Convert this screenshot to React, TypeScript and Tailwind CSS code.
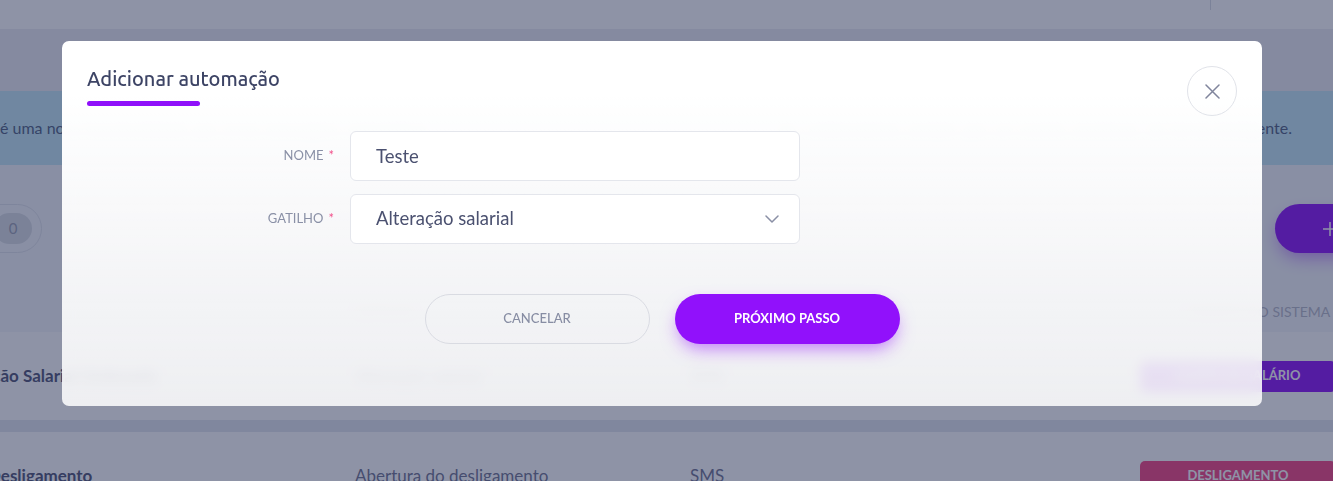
import React from 'react';

const Tag: React.FC<{ color: string; children: React.ReactNode }> = ({ color, children }) => (
  <div
    className={`flex h-[31px] w-[196px] shrink-0 items-center justify-center rounded-[5px] text-[13px] font-bold uppercase text-white ${color}`}
  >
    {children}
  </div>
);

const Page: React.FC = () => {
  return (
    <div className="flex flex-col">
      {/* topo */}
      <div className="flex h-[29px] justify-end bg-white pr-[122px]">
        <div className="h-[10px] border-l border-[#d9dce5]" />
      </div>
      <div className="h-[62px] bg-[#ececf3]" />

      {/* aviso */}
      <div className="flex h-[74px] items-center justify-between overflow-hidden whitespace-nowrap bg-[#c2e7f5] pr-[41px] text-[16px] text-[#4e5f80]">
        <span>é uma nova funcionalidade que envia mensagens automáticas</span>
        <span>aos colaboradores sempre que um evento acontecer, de forma inteligente.</span>
      </div>

      {/* filtros */}
      <div className="flex h-[167px] flex-col">
        <div className="mt-[39px] flex h-[49px] items-center justify-between">
          <div className="-ml-[79px] flex h-[49px] shrink-0 items-center gap-[12px] rounded-full border border-[#dfe2ea] pl-[20px] pr-[9px]">
            <span className="w-[40px] text-[14px] text-[#8a90a6]">Todas</span>
            <span className="flex h-[31px] w-[38px] items-center justify-center rounded-full bg-[#d8dce3] text-[15px] text-[#9aa0b2]">
              0
            </span>
          </div>
          <button className="-mr-[182px] flex h-[49px] w-[240px] shrink-0 items-center gap-[10px] rounded-full bg-[#8a10f7] pl-[47px] text-[13px] font-bold uppercase text-white shadow-[0_8px_18px_-4px_rgba(138,16,247,0.5)]">
            <svg width="16" height="16" viewBox="0 0 16 16" fill="none" stroke="currentColor" strokeWidth="1.5">
              <path d="M8 1v14M1 8h14" />
            </svg>
            Nova automação
          </button>
        </div>

        {/* cabeçalho tabela */}
        <div className="-ml-[12px] mt-auto flex h-[42px] items-center text-[14px] uppercase text-[#b4b8c6]">
          <div className="w-[367px] shrink-0" />
          <div className="w-[335px] shrink-0">Gatilho</div>
          <div className="w-[450px] shrink-0">Canal</div>
          <div className="shrink-0 whitespace-nowrap pl-[48px]">Evento do sistema</div>
        </div>
      </div>

      {/* linhas */}
      <div className="-ml-[12px] flex h-[88px] items-center bg-white text-[17px] text-[#6f7391]">
        <div className="w-[367px] shrink-0 whitespace-nowrap">
          <span className="-ml-[42px] font-bold text-[#4e5374]">Alteração Salarial Ordenado</span>
        </div>
        <div className="w-[335px] shrink-0">Alteração salarial</div>
        <div className="w-[450px] shrink-0">SMS</div>
        <Tag color="bg-[#8a10f7]">Ajuste de salário</Tag>
      </div>
      <div className="h-[12px] bg-[#e2e6ef]" />
      <div className="-ml-[12px] flex h-[88px] items-center bg-white text-[17px] text-[#6f7391]">
        <div className="w-[367px] shrink-0 whitespace-nowrap font-bold text-[#4e5374]">Desligamento</div>
        <div className="w-[335px] shrink-0">Abertura do desligamento</div>
        <div className="w-[450px] shrink-0">SMS</div>
        <Tag color="bg-[#f54381]">Desligamento</Tag>
      </div>
    </div>
  );
};

const FormRow: React.FC<{ label: string; children: React.ReactNode }> = ({ label, children }) => (
  <div className="flex items-center">
    <label className="w-[263px] pr-[16px] text-right text-[13px] uppercase text-[#8a90a6]">
      {label}
      <span className="ml-[5px] text-[#f2528c]">*</span>
    </label>
    {children}
  </div>
);

const Modal: React.FC = () => {
  return (
    <div className="relative h-[365px] w-[1200px] rounded-[7px] bg-linear-to-b from-white from-[15%] to-white/85 px-[25px] pt-[26px] backdrop-blur-[6px]">
      <h2 className="font-['Ubuntu','Open_Sans',sans-serif] text-[20px] font-medium leading-[24px] text-[#3d4465]">
        Adicionar automação
      </h2>
      <div className="mt-[10px] h-[5px] w-[113px] rounded-full bg-[#8f10fa]" />

      <button className="absolute right-[25px] top-[25px] flex h-[50px] w-[50px] items-center justify-center rounded-full border border-[#e1e3e9]">
        <svg width="15" height="15" viewBox="0 0 15 15" fill="none" stroke="#80859c" strokeWidth="1.5" strokeLinecap="round">
          <path d="M1 1l13 13M14 1L1 14" />
        </svg>
      </button>

      <div className="mt-[25px] flex flex-col gap-[13px]">
        <FormRow label="Nome">
          <input
            readOnly
            value="Teste"
            className="h-[50px] w-[450px] rounded-[6px] border border-[#e4e6ec] bg-white pl-[25px] text-[18.5px] text-[#4b5170] outline-none"
          />
        </FormRow>
        <FormRow label="Gatilho">
          <div className="flex h-[50px] w-[450px] items-center justify-between rounded-[6px] border border-[#e4e6ec] bg-white pl-[25px] pr-[20px] text-[18.5px] text-[#4b5170]">
            <span>Alteração salarial</span>
            <svg width="14" height="8" viewBox="0 0 14 8" fill="none" stroke="#8a8fa5" strokeWidth="1.5" strokeLinecap="round" strokeLinejoin="round">
              <path d="M1 1l6 6 6-6" />
            </svg>
          </div>
        </FormRow>
      </div>

      <div className="mt-[50px] flex justify-center gap-[25px]">
        <button className="h-[50px] w-[225px] rounded-full border border-[#d9dbe2] text-[13px] font-medium uppercase text-[#878da3]">
          Cancelar
        </button>
        <button className="h-[50px] w-[225px] rounded-full bg-[#9111fb] text-[13px] font-bold uppercase text-white shadow-[0_8px_18px_-4px_rgba(145,17,251,0.55)]">
          Próximo passo
        </button>
      </div>
    </div>
  );
};

export default function App() {
  return (
    <div className="relative h-[481px] w-[1333px] overflow-hidden bg-[#f5f7fb] font-['Lato',sans-serif]">
      <Page />
      <div className="absolute inset-0 bg-[#1e274e]/50">
        <div className="pl-[62px] pt-[41px]">
          <Modal />
        </div>
      </div>
    </div>
  );
}
